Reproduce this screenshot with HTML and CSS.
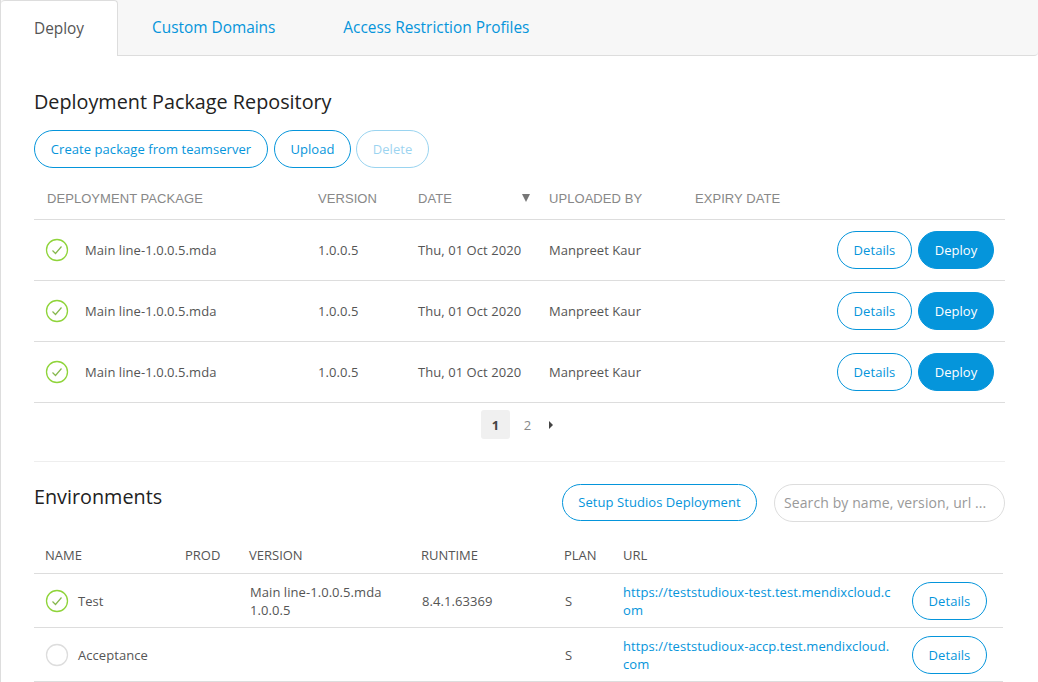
FILE: index.html
```html
<!DOCTYPE html>
<html lang="en">
<head>
    <meta charset="UTF-8">
    <title>Deploy</title>
    <link rel="stylesheet" href="styles.css">
</head>
<body>
<div class="panel">
    <!-- tabs -->
    <div class="tabs">
        <a class="tab tab-active">Deploy</a>
        <a class="tab tab-domains">Custom Domains</a>
        <a class="tab tab-profiles">Access Restriction Profiles</a>
    </div>

    <div class="content">
        <!-- package repository -->
        <h2 class="repo-title">Deployment Package Repository</h2>
        <div class="toolbar">
            <button class="btn btn-create">Create package from teamserver</button>
            <button class="btn btn-upload">Upload</button>
            <button class="btn btn-delete">Delete</button>
        </div>

        <table class="grid packages">
            <colgroup>
                <col class="c-package"><col class="c-version"><col class="c-date"><col class="c-by"><col class="c-expiry"><col>
            </colgroup>
            <thead>
                <tr>
                    <th>Deployment Package</th>
                    <th>Version</th>
                    <th><span class="sort-head">Date <span class="sort-arrow"></span></span></th>
                    <th>Uploaded By</th>
                    <th>Expiry Date</th>
                    <th></th>
                </tr>
            </thead>
            <tbody>
                <tr>
                    <td><div class="name-cell"><svg class="status" viewBox="0 0 24 24"><circle cx="12" cy="12" r="10.5"/><path d="M7.5 12.5l3 3 6-7"/></svg>Main line-1.0.0.5.mda</div></td>
                    <td>1.0.0.5</td>
                    <td>Thu, 01 Oct 2020</td>
                    <td>Manpreet Kaur</td>
                    <td></td>
                    <td><div class="actions"><button class="btn btn-details">Details</button><button class="btn btn-deploy">Deploy</button></div></td>
                </tr>
                <tr>
                    <td><div class="name-cell"><svg class="status" viewBox="0 0 24 24"><circle cx="12" cy="12" r="10.5"/><path d="M7.5 12.5l3 3 6-7"/></svg>Main line-1.0.0.5.mda</div></td>
                    <td>1.0.0.5</td>
                    <td>Thu, 01 Oct 2020</td>
                    <td>Manpreet Kaur</td>
                    <td></td>
                    <td><div class="actions"><button class="btn btn-details">Details</button><button class="btn btn-deploy">Deploy</button></div></td>
                </tr>
                <tr>
                    <td><div class="name-cell"><svg class="status" viewBox="0 0 24 24"><circle cx="12" cy="12" r="10.5"/><path d="M7.5 12.5l3 3 6-7"/></svg>Main line-1.0.0.5.mda</div></td>
                    <td>1.0.0.5</td>
                    <td>Thu, 01 Oct 2020</td>
                    <td>Manpreet Kaur</td>
                    <td></td>
                    <td><div class="actions"><button class="btn btn-details">Details</button><button class="btn btn-deploy">Deploy</button></div></td>
                </tr>
            </tbody>
        </table>

        <div class="pager">
            <span class="page page-current">1</span>
            <span class="page">2</span>
            <span class="page-next"></span>
        </div>

        <!-- environments -->
        <div class="env-head">
            <h2 class="env-title">Environments</h2>
            <button class="btn btn-setup">Setup Studios Deployment</button>
            <input class="search" type="text" placeholder="Search by name, version, url ...">
        </div>

        <table class="grid environments">
            <colgroup>
                <col class="e-name"><col class="e-prod"><col class="e-version"><col class="e-runtime"><col class="e-plan"><col class="e-url"><col>
            </colgroup>
            <thead>
                <tr>
                    <th>Name</th>
                    <th>Prod</th>
                    <th>Version</th>
                    <th>Runtime</th>
                    <th>Plan</th>
                    <th>URL</th>
                    <th></th>
                </tr>
            </thead>
            <tbody>
                <tr>
                    <td><div class="name-cell env-name"><svg class="status" viewBox="0 0 24 24"><circle cx="12" cy="12" r="10.5"/><path d="M7.5 12.5l3 3 6-7"/></svg>Test</div></td>
                    <td></td>
                    <td class="nudge">Main line-1.0.0.5.mda<br>1.0.0.5</td>
                    <td class="nudge">8.4.1.63369</td>
                    <td class="nudge">S</td>
                    <td><a class="env-url">https://teststudioux-test.test.mendixcloud.com</a></td>
                    <td><button class="btn btn-details">Details</button></td>
                </tr>
                <tr>
                    <td><div class="name-cell env-name"><svg class="status status-off" viewBox="0 0 24 24"><circle cx="12" cy="12" r="10.5"/></svg>Acceptance</div></td>
                    <td></td>
                    <td></td>
                    <td></td>
                    <td class="nudge">S</td>
                    <td><a class="env-url">https://teststudioux-accp.test.mendixcloud.com</a></td>
                    <td><button class="btn btn-details">Details</button></td>
                </tr>
            </tbody>
        </table>
    </div>
</div>
</body>
</html>
```

FILE: styles.css
```css
html, body {
    margin: 0;
    height: 682px;
    overflow: hidden;
}
body {
    font-family: "Open Sans", sans-serif;
    font-size: 13px;
    letter-spacing: 0.06px;
    color: #555;
    background-color: #fff;
}
.panel {
    border-left: 1px solid #ddd;
}

/* tabs */
.tabs {
    display: flex;
    height: 55px;
    background-color: #f7f7f7;
    border-bottom: 1px solid #ddd;
    border-bottom-right-radius: 4px;
    font-size: 15.4px;
    letter-spacing: 0;
}
.tab {
    line-height: 55px;
    color: #0595db;
}
.tab-active {
    width: 117px;
    height: 56px;
    box-sizing: border-box;
    padding-left: 33px;
    color: #555;
    background-color: #fff;
    border: 1px solid #ddd;
    border-left: none;
    border-bottom: none;
    border-top-right-radius: 4px;
    border-top-left-radius: 4px;
}
.tab-domains {
    margin-left: 34px;
}
.tab-profiles {
    margin-left: 68px;
}

.content {
    padding: 0 33px;
}
h2 {
    margin: 0;
    font-size: 19.8px;
    font-weight: 400;
    line-height: 28px;
    letter-spacing: 0;
    color: #222;
}
.repo-title {
    margin-top: 32px;
}

/* buttons */
.btn {
    height: 38px;
    padding: 0;
    font-family: "Open Sans", sans-serif;
    font-size: 13px;
    letter-spacing: 0.06px;
    color: #0595db;
    background-color: #fff;
    border: 1px solid #0595db;
    border-radius: 19px;
    box-sizing: border-box;
    white-space: nowrap;
}
.toolbar {
    display: flex;
    margin-top: 14px;
}
.btn-create {
    width: 234px;
}
.btn-upload {
    width: 77px;
    margin-left: 6px;
}
.btn-delete {
    width: 73px;
    margin-left: 5px;
    opacity: 0.4;
}
.btn-details {
    width: 75px;
}
.btn-deploy {
    width: 76px;
    color: #fff;
    background-color: #0595db;
}
.actions {
    display: flex;
    justify-content: flex-end;
    gap: 6px;
    padding-right: 11px;
}

/* tables */
.grid {
    width: 971px;
    border-collapse: collapse;
    table-layout: fixed;
}
.grid th {
    padding: 0;
    text-align: left;
    font-weight: 400;
    text-transform: uppercase;
}
.grid td {
    padding: 0;
    border-bottom: 1px solid #ddd;
    vertical-align: middle;
}
.packages {
    margin-top: 11px;
}
.packages th {
    height: 38px;
    padding-bottom: 2px;
    border-bottom: 1px solid #ddd;
    font-family: "Liberation Sans", Arial, sans-serif;
    font-size: 13px;
    color: #888;
}
.packages th:first-child {
    padding-left: 13px;
}
.packages td {
    height: 60px;
}
.c-package { width: 284px; }
.c-version { width: 100px; }
.c-date { width: 131px; }
.c-by { width: 146px; }
.c-expiry { width: 100px; }

.sort-head {
    display: flex;
    justify-content: space-between;
    align-items: center;
    width: 112px;
}
.sort-arrow {
    width: 0;
    height: 0;
    border-left: 4px solid transparent;
    border-right: 4px solid transparent;
    border-top: 8px solid #777;
}

.name-cell {
    display: flex;
    align-items: center;
    gap: 16px;
    padding-left: 11px;
}
.env-name {
    gap: 9px;
}
.status {
    width: 24px;
    height: 24px;
    flex: none;
    fill: none;
    stroke: #8fd43a;
    stroke-width: 1.3;
}
.status path {
    stroke: #86b84e;
    stroke-width: 1.2;
}
.status-off {
    stroke: #ddd;
}

/* pager */
.pager {
    display: flex;
    align-items: center;
    justify-content: center;
    height: 58px;
    padding-right: 5px;
    border-bottom: 1px solid #eee;
}
.page {
    width: 29px;
    height: 29px;
    margin-bottom: 16px;
    line-height: 30px;
    text-align: center;
    color: #888;
    border-radius: 3px;
}
.page-current {
    margin-right: 3px;
    font-weight: 700;
    color: #444;
    background-color: #f0f0f0;
}
.page-next {
    width: 0;
    height: 0;
    margin: 0 0 14px 7px;
    border-top: 4.5px solid transparent;
    border-bottom: 4.5px solid transparent;
    border-left: 4px solid #444;
}

/* environments */
.env-head {
    display: flex;
    align-items: flex-start;
    width: 971px;
    margin-top: 22px;
}
.env-title {
    flex: 1;
    margin-top: -1px;
}
.btn-setup {
    height: 37px;
    width: 195px;
    padding-bottom: 1px;
}
.search {
    width: 231px;
    height: 38px;
    margin-left: 17px;
    padding: 0 9px 2px;
    box-sizing: border-box;
    font-family: "Open Sans", sans-serif;
    font-size: 14px;
    letter-spacing: 0.1px;
    color: #555;
    border: 1px solid #ddd;
    border-radius: 19px;
}
.search::placeholder {
    color: #999;
    opacity: 1;
}
.environments {
    width: 969px;
    margin-top: 14px;
}
.environments th {
    height: 37px;
    border-bottom: 1px solid #ddd;
    font-size: 13px;
    letter-spacing: 0;
    color: #555;
}
.environments th:first-child {
    padding-left: 11px;
}
.environments td {
    height: 53px;
    line-height: 18px;
}
.e-name { width: 151px; }
.e-prod { width: 64px; }
.e-version { width: 172px; }
.e-runtime { width: 143px; }
.e-plan { width: 59px; }
.e-url { width: 289px; }
.nudge {
    padding-left: 1px !important;
}
.env-url {
    display: block;
    width: 269px;
    letter-spacing: 0.07px;
    color: #0595db;
    word-break: break-all;
}
```
